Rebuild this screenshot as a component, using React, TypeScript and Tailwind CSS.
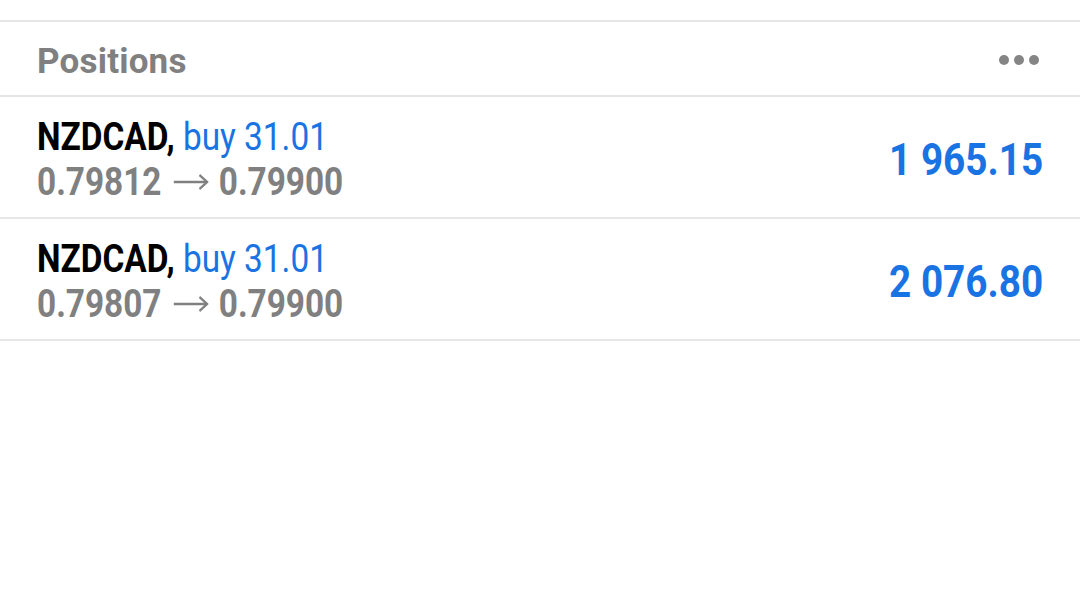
const positions = [
  { symbol: "NZDCAD", side: "buy", volume: "31.01", open: "0.79812", current: "0.79900", profit: "1 965.15" },
  { symbol: "NZDCAD", side: "buy", volume: "31.01", open: "0.79807", current: "0.79900", profit: "2 076.80" },
]

function Dots() {
  return (
    <div className="mt-[11px] flex items-center gap-[5px]">
      <span className="block h-[10px] w-[10px] rounded-full bg-[#858585]" />
      <span className="block h-[10px] w-[10px] rounded-full bg-[#858585]" />
      <span className="block h-[10px] w-[10px] rounded-full bg-[#858585]" />
    </div>
  )
}

// drawn wider than shown: the whole line is squeezed by scale-x
function Arrow() {
  return (
    <svg
      width="42"
      height="16"
      viewBox="0 0 42 16"
      className="ml-[13px] mr-[12px] inline-block align-[5px]"
      fill="none"
      stroke="#808080"
      strokeWidth="2.4"
    >
      <path d="M1 8H40" />
      <path d="M31 1L40 8L31 15" strokeLinejoin="miter" />
    </svg>
  )
}

export default function App() {
  return (
    <div className="h-[612px] w-[1080px] overflow-hidden bg-white font-['Roboto',sans-serif]">
      <div className="h-[20px]" />
      <div className="border-t-2 border-[#e6e6e6]">
        <div className="flex h-[75px] items-start justify-between border-b-2 border-[#e6e6e6] pl-[37px] pr-[41px] pt-[22px]">
          <span className="text-[35px] font-bold leading-none tracking-[0.2px] text-[#808080]">Positions</span>
          <Dots />
        </div>
        {positions.map((p, i) => (
          <div
            key={i}
            className="flex h-[122px] items-start justify-between border-b-2 border-[#e6e6e6] pl-[37px] pr-[37px]"
          >
            <div className="flex flex-col pt-[18px] text-[39px] leading-[45px]">
              <span className="inline-block origin-left scale-x-[0.855] whitespace-nowrap">
                <span className="font-bold text-black">{p.symbol},</span>{" "}
                <span className="text-[#1a73e3]">
                  {p.side} {p.volume}
                </span>
              </span>
              <span className="inline-block origin-left scale-x-[0.855] whitespace-nowrap font-bold text-[#808080]">
                {p.open}
                <Arrow />
                {p.current}
              </span>
            </div>
            <span className="mt-[40px] inline-block origin-right scale-x-[0.86] whitespace-nowrap text-[45px] font-bold leading-none text-[#1a73e3]">
              {p.profit}
            </span>
          </div>
        ))}
      </div>
    </div>
  )
}
